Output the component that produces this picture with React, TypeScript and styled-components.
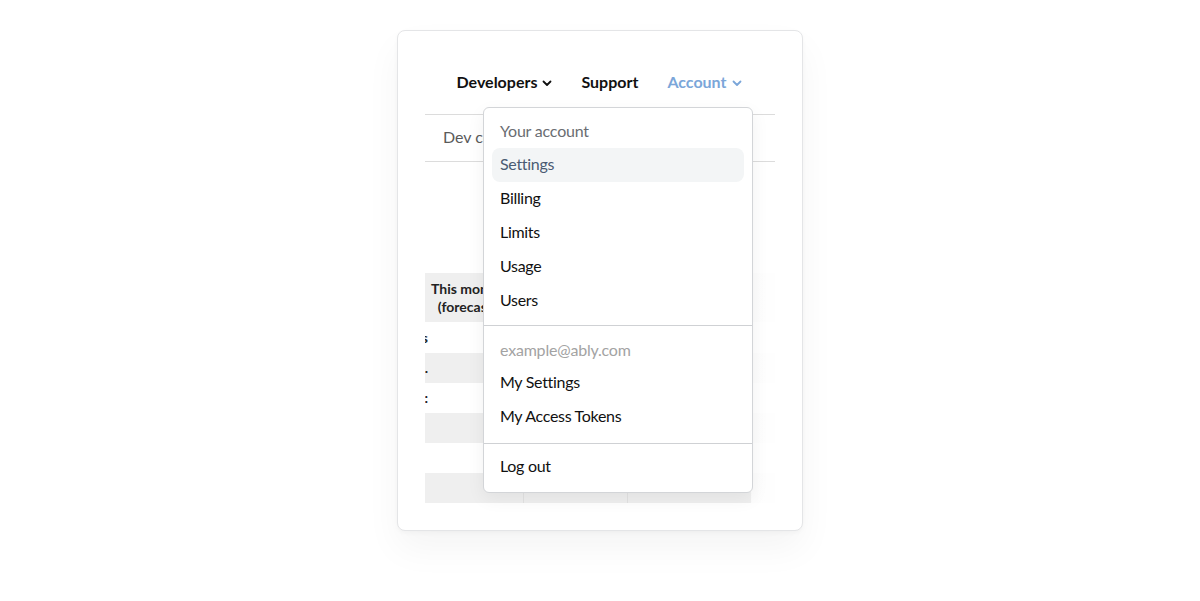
import React from "react";
import styled, { createGlobalStyle } from "styled-components";

const Global = createGlobalStyle`
  html, body { margin: 0; padding: 0; background: #ffffff; }
  body { font-family: Lato, "Open Sans", sans-serif; color: #111; }
  * { box-sizing: border-box; }
`;

const Page = styled.div`
  width: 1200px;
  height: 601px;
  display: flex;
  justify-content: center;
  padding-top: 30px;
`;

const Card = styled.div`
  width: 406px;
  height: 501px;
  background: #fff;
  border: 1px solid #e4e5e7;
  border-radius: 8px;
  box-shadow: 0 18px 36px rgba(0, 0, 0, 0.045), 0 2px 4px rgba(0, 0, 0, 0.03);
  padding: 0 27px;
  display: flex;
  flex-direction: column;
  position: relative;
`;

const Nav = styled.nav`
  height: 83px;
  padding-top: 39px;
  padding-right: 2px;
  display: flex;
  justify-content: center;
  align-items: flex-start;
  gap: 29px;
  position: relative;
`;

const NavItem = styled.div<{ $active?: boolean }>`
  display: flex;
  align-items: center;
  gap: 5px;
  font-size: 16px;
  font-weight: 700;
  line-height: 24px;
  color: ${(p) => (p.$active ? "#7ba6d9" : "#111")};
  position: relative;
`;

const Chevron = ({ color }: { color: string }) => (
  <svg width="10" height="7" viewBox="0 0 10 7" style={{ marginTop: 3 }}>
    <polyline points="1.5,1.5 5,5 8.5,1.5" fill="none" stroke={color} strokeWidth="1.8" strokeLinecap="round" strokeLinejoin="round" />
  </svg>
);

const Tabs = styled.div`
  height: 48px;
  border-top: 1px solid #dcdcdc;
  border-bottom: 1px solid #dcdcdc;
  display: flex;
  align-items: center;
  padding-left: 18px;
  padding-bottom: 4px;
  font-size: 16px;
  color: #5a5a5a;
`;

const Spacer = styled.div`
  height: 111px;
`;

const TableWrap = styled.div`
  position: relative;
  overflow: hidden;
  height: 230px;
`;

const Table = styled.div`
  display: grid;
  grid-template-columns: 98px 96px 104px 124px 60px;
  margin-left: -95px;
`;

const Row = styled.div<{ $shade?: boolean; $h: number }>`
  display: contents;
  & > div {
    background: ${(p) => (p.$shade ? "#efefef" : "#fff")};
    height: ${(p) => p.$h}px;
  }
`;

const Cell = styled.div`
  display: flex;
  align-items: center;
  justify-content: center;
  font-size: 14px;
  font-weight: 700;
  color: #222;
  line-height: 18px;
  border-right: 1px solid #e2e2e2;
  padding: 0 4px;
`;

const LabelCell = styled(Cell)`
  justify-content: flex-end;
  padding: 0;
  border-right: none;
`;

const HeadCell = styled(Cell)`
  padding-left: 3px;
  justify-content: flex-start;
  text-align: left;
  border-right: none;
`;

const Fade = styled.div`
  position: absolute;
  right: 0;
  top: 0;
  bottom: 0;
  width: 24px;
  background: linear-gradient(to right, rgba(255,255,255,0.88), rgba(255,255,255,0.97));
`;

const Menu = styled.div`
  position: absolute;
  top: 76px;
  left: 85px;
  width: 270px;
  background: #fff;
  border: 1px solid #d3d5d8;
  border-radius: 6px;
  box-shadow: 0 6px 18px rgba(0, 0, 0, 0.06);
  z-index: 5;
  display: flex;
  flex-direction: column;
`;

const Section = styled.div<{ $pt?: number; $pb?: number }>`
  padding: ${(p) => p.$pt ?? 8}px 8px ${(p) => p.$pb ?? 7}px;
  display: flex;
  flex-direction: column;
  & + & {
    border-top: 1px solid #cfd1d4;
  }
`;

const MenuHead = styled.div<{ $muted?: boolean; $h?: number }>`
  height: ${(p) => p.$h ?? 32}px;
  flex-shrink: 0;
  display: flex;
  align-items: center;
  padding: 0 8px 4px;
  font-size: 16px;
  letter-spacing: -0.2px;
  color: ${(p) => (p.$muted ? "#a3a3a3" : "#6a6d72")};
`;

const MenuItem = styled.div<{ $selected?: boolean }>`
  height: 34px;
  flex-shrink: 0;
  display: flex;
  align-items: center;
  padding: 0 8px 4px;
  border-radius: 8px;
  font-size: 16px;
  letter-spacing: -0.3px;
  color: ${(p) => (p.$selected ? "#4a5b73" : "#111")};
  background: ${(p) => (p.$selected ? "#f3f5f6" : "transparent")};
`;

const rows = [
  { shade: false, label: "s", h: 31 },
  { shade: true, label: ".", h: 30 },
  { shade: false, label: ":", h: 30 },
  { shade: true, label: "", h: 30 },
  { shade: false, label: "", h: 30 },
  { shade: true, label: "", h: 30 },
];

export default function App() {
  return (
    <>
      <Global />
      <Page>
        <Card>
          <Nav>
            <NavItem>
              Developers <Chevron color="#111" />
            </NavItem>
            <NavItem>Support</NavItem>
            <NavItem $active>
              Account <Chevron color="#7ba6d9" />
            </NavItem>
          </Nav>
          <Tabs>Dev console</Tabs>
          <Spacer />
          <TableWrap>
            <Table>
              <Row $shade $h={49}>
                <LabelCell />
                <HeadCell>
                  <span>
                    This month
                    <br />
                    &nbsp;&nbsp;(forecast)
                  </span>
                </HeadCell>
                <Cell />
                <Cell />
                <Cell />
              </Row>
              {rows.map((r, i) => (
                <Row key={i} $shade={r.shade} $h={r.h}>
                  <LabelCell>{r.label}</LabelCell>
                  <Cell />
                  <Cell />
                  <Cell />
                  <Cell />
                </Row>
              ))}
            </Table>
            <Fade />
          </TableWrap>
          <Menu>
            <Section>
              <MenuHead>Your account</MenuHead>
              <MenuItem $selected>Settings</MenuItem>
              <MenuItem>Billing</MenuItem>
              <MenuItem>Limits</MenuItem>
              <MenuItem>Usage</MenuItem>
              <MenuItem>Users</MenuItem>
            </Section>
            <Section $pt={10} $pb={9}>
              <MenuHead $muted $h={30}>example@ably.com</MenuHead>
              <MenuItem>My Settings</MenuItem>
              <MenuItem>My Access Tokens</MenuItem>
            </Section>
            <Section $pt={6} $pb={8}>
              <MenuItem>Log out</MenuItem>
            </Section>
          </Menu>
        </Card>
      </Page>
    </>
  );
}
